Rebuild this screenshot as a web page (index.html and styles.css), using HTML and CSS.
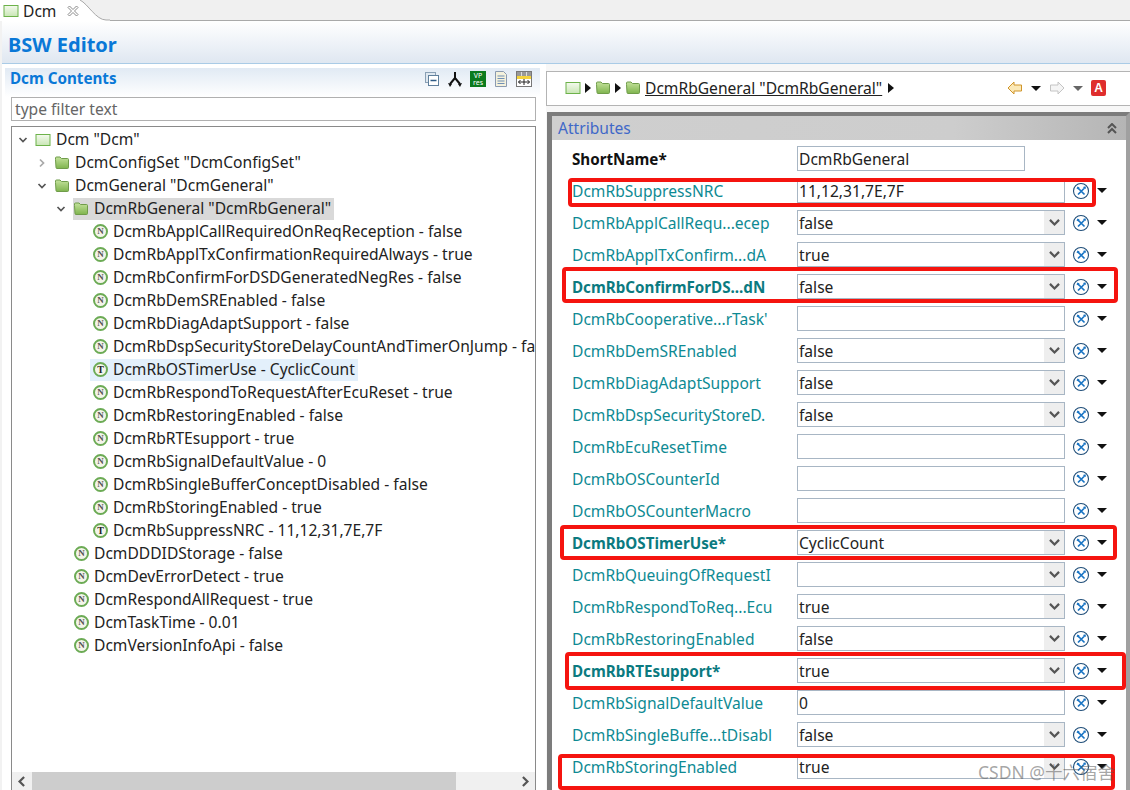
FILE: index.html
```html
<!DOCTYPE html>
<html lang="en">
<head>
<meta charset="utf-8">
<title>BSW Editor</title>
<link rel="stylesheet" href="styles.css">
</head>
<body>
<svg class="defs" width="0" height="0" aria-hidden="true">
  <defs>
    <linearGradient id="gf" x1="0" y1="0" x2="0" y2="1"><stop offset="0" stop-color="#c4e29c"/><stop offset="1" stop-color="#7fb44e"/></linearGradient>
    <linearGradient id="gb" x1="0" y1="0" x2="0" y2="1"><stop offset="0" stop-color="#f4faee"/><stop offset="1" stop-color="#c9e6b5"/></linearGradient>
    <symbol id="folder" viewBox="0 0 16 14"><path d="M1.500 3.500V2q0-1 1-1h3.500l1.500 1.500h6q1 0 1 1v8q0 1-1 1h-10.500q-1 0-1-1z" fill="url(#gf)" stroke="#6f9c4a"/></symbol>
    <symbol id="box" viewBox="0 0 16 14"><rect x="1" y="1.500" width="14" height="11" fill="url(#gb)" stroke="#6db24a"/></symbol>
    <symbol id="tools" viewBox="0 0 18 18"><circle cx="9" cy="9" r="7.500" fill="#fff" stroke="#1f4e79" stroke-width="1.100"/><path d="M6 6l6.500 6.500M12 6.500l-6 6" stroke="#1874c4" stroke-width="1.700"/><path d="M4.500 6.500l1-2 2 1-1 2zM11 5l2.500-.8.500 2.300-1.500.5z" fill="#1874c4"/></symbol>
    <symbol id="chev" viewBox="0 0 10 10"><path d="M1.500 3l3.500 3.500 3.500-3.500" fill="none" stroke="#555" stroke-width="1.700"/></symbol>
  </defs>
</svg>
<div class="tabbar">
  <div class="tab"><svg class="ic16"><use href="#box"/></svg><span>Dcm</span>
    <svg class="close" width="12" height="12" viewBox="0 0 12 12"><path d="M1 2.500L2.500 1 6 4.500 9.500 1 11 2.500 7.500 6 11 9.500 9.500 11 6 7.500 2.500 11 1 9.500 4.500 6z" fill="#fff" stroke="#8a8a8a"/></svg>
  </div>
  <svg class="tabcurve" width="30" height="21"><path d="M0 0C8 4 16 20 26 20H30V21H0z" fill="#fff"/><path d="M0 0C8 4 16 20 26 20H30" fill="none" stroke="#a9a9a9"/></svg>
</div>
<header class="edhead">BSW Editor</header>
<main class="work">
  <section class="left">
    <div class="lhead">
      <h2>Dcm Contents</h2>
      <div class="ltools">
        <svg width="16" height="16" viewBox="0 0 16 16"><rect x="1.500" y="1.500" width="10" height="10" fill="#dfe8f0" stroke="#8aa0b5"/><rect x="4.500" y="4.500" width="10" height="10" fill="#fff" stroke="#5f7f9c"/><path d="M6.500 9.500h6" stroke="#2d5a85" stroke-width="1.500"/></svg>
        <svg width="16" height="16" viewBox="0 0 16 16"><path d="M8 1v6M8 7L3 13M8 7l5 6" fill="none" stroke="#111" stroke-width="2"/><path d="M1 12l4 1-2 3zM15 12l-4 1 2 3z" fill="#111"/></svg>
        <span class="vp"><b>VP</b><i>res</i></span>
        <svg width="16" height="16" viewBox="0 0 16 16"><path d="M2.500 .5h8l3 3v12h-11z" fill="#f4f1dc" stroke="#8a9ab0"/><path d="M4.500 5h7M4.500 7.500h7M4.500 10h7M4.500 12.500h7" stroke="#6f8fb5"/></svg>
        <svg width="16" height="16" viewBox="0 0 16 16"><rect x=".5" y=".5" width="15" height="15" fill="#fff" stroke="#777"/><rect x="1" y="1" width="14" height="4" fill="#999"/><path d="M5.500 1v4M10.500 1v4" stroke="#ddd"/><rect x="1" y="5" width="14" height="3" fill="#f5d33c"/><path d="M2.500 11h11M2.500 11l2-2M2.500 11l2 2M13.500 11l-2-2M13.500 11l-2 2M8 8v6" stroke="#222" fill="none"/></svg>
      </div>
    </div>
    <div class="filter">type filter text</div>
    <div class="treebox">
      <ul class="tree">
        <li class="r l0"><svg class="tw"><use href="#chev"/></svg><svg class="ic16"><use href="#box"/></svg><span>Dcm "Dcm"</span></li>
        <li class="r l1"><svg class="tw side"><use href="#chev"/></svg><svg class="ic16"><use href="#folder"/></svg><span>DcmConfigSet "DcmConfigSet"</span></li>
        <li class="r l1"><svg class="tw"><use href="#chev"/></svg><svg class="ic16"><use href="#folder"/></svg><span>DcmGeneral "DcmGeneral"</span></li>
        <li class="r l2"><svg class="tw"><use href="#chev"/></svg><div class="pick sel"><svg class="ic16"><use href="#folder"/></svg><span>DcmRbGeneral "DcmRbGeneral"</span></div></li>
        <li class="r l3"><i class="nd">N</i><span>DcmRbApplCallRequiredOnReqReception - false</span></li>
        <li class="r l3"><i class="nd">N</i><span>DcmRbApplTxConfirmationRequiredAlways - true</span></li>
        <li class="r l3"><i class="nd">N</i><span>DcmRbConfirmForDSDGeneratedNegRes - false</span></li>
        <li class="r l3"><i class="nd">N</i><span>DcmRbDemSREnabled - false</span></li>
        <li class="r l3"><i class="nd">N</i><span>DcmRbDiagAdaptSupport - false</span></li>
        <li class="r l3"><i class="nd">N</i><span class="cut">DcmRbDspSecurityStoreDelayCountAndTimerOnJump - fa</span></li>
        <li class="r l3"><div class="pick hov"><i class="nd t">T</i><span>DcmRbOSTimerUse - CyclicCount</span></div></li>
        <li class="r l3"><i class="nd">N</i><span>DcmRbRespondToRequestAfterEcuReset - true</span></li>
        <li class="r l3"><i class="nd">N</i><span>DcmRbRestoringEnabled - false</span></li>
        <li class="r l3"><i class="nd">N</i><span>DcmRbRTEsupport - true</span></li>
        <li class="r l3"><i class="nd">N</i><span>DcmRbSignalDefaultValue - 0</span></li>
        <li class="r l3"><i class="nd">N</i><span>DcmRbSingleBufferConceptDisabled - false</span></li>
        <li class="r l3"><i class="nd">N</i><span>DcmRbStoringEnabled - true</span></li>
        <li class="r l3"><i class="nd t">T</i><span>DcmRbSuppressNRC - 11,12,31,7E,7F</span></li>
        <li class="r l2b"><i class="nd">N</i><span>DcmDDDIDStorage - false</span></li>
        <li class="r l2b"><i class="nd">N</i><span>DcmDevErrorDetect - true</span></li>
        <li class="r l2b"><i class="nd">N</i><span>DcmRespondAllRequest - true</span></li>
        <li class="r l2b"><i class="nd">N</i><span>DcmTaskTime - 0.01</span></li>
        <li class="r l2b"><i class="nd">N</i><span>DcmVersionInfoApi - false</span></li>
      </ul>
      <div class="hscroll"><svg class="sarrow flip" viewBox="0 0 10 10"><use href="#chev"/></svg><div class="thumb"></div><svg class="sarrow" viewBox="0 0 10 10"><use href="#chev"/></svg></div>
    </div>
  </section>
  <section class="right">
    <nav class="crumb">
      <svg class="ic16"><use href="#box"/></svg><i class="tri"></i>
      <svg class="ic16"><use href="#folder"/></svg><i class="tri"></i>
      <svg class="ic16"><use href="#folder"/></svg>
      <a class="link">DcmRbGeneral "DcmRbGeneral"</a><i class="tri"></i>
      <div class="navs">
        <svg width="16" height="14" viewBox="0 0 16 14"><path d="M7 1L1 7l6 6V10h7.500V4H7z" fill="#fbe9b8" stroke="#d0952a"/></svg><i class="dn"></i>
        <svg width="16" height="14" viewBox="0 0 16 14"><path d="M9 1l6 6-6 6V10H1.500V4H9z" fill="#f5f5f5" stroke="#c4c4c4"/></svg><i class="dn gray"></i>
        <span class="abtn">A</span>
      </div>
    </nav>
    <div class="attr">
      <div class="attrhead"><h3>Attributes</h3><svg class="coll" width="10" height="11" viewBox="0 0 10 11"><path d="M1 5l4-4 4 4M1 10l4-4 4 4" fill="none" stroke="#555" stroke-width="2"/></svg></div>
      <div class="form">
        <div class="row"><label class="bold">ShortName*</label><div class="fld short">DcmRbGeneral</div></div>
        <div class="row"><label>DcmRbSuppressNRC</label><div class="fld">11,12,31,7E,7F</div><svg class="tl"><use href="#tools"/></svg><i class="dn"></i></div>
        <div class="row"><label>DcmRbApplCallRequ...ecep</label><div class="fld sl">false<b><svg><use href="#chev"/></svg></b></div><svg class="tl"><use href="#tools"/></svg><i class="dn"></i></div>
        <div class="row"><label>DcmRbApplTxConfirm...dA</label><div class="fld sl">true<b><svg><use href="#chev"/></svg></b></div><svg class="tl"><use href="#tools"/></svg><i class="dn"></i></div>
        <div class="row"><label class="bold tealb">DcmRbConfirmForDS...dN</label><div class="fld sl">false<b><svg><use href="#chev"/></svg></b></div><svg class="tl"><use href="#tools"/></svg><i class="dn"></i></div>
        <div class="row"><label>DcmRbCooperative...rTask'</label><div class="fld"></div><svg class="tl"><use href="#tools"/></svg><i class="dn"></i></div>
        <div class="row"><label>DcmRbDemSREnabled</label><div class="fld sl">false<b><svg><use href="#chev"/></svg></b></div><svg class="tl"><use href="#tools"/></svg><i class="dn"></i></div>
        <div class="row"><label>DcmRbDiagAdaptSupport</label><div class="fld sl">false<b><svg><use href="#chev"/></svg></b></div><svg class="tl"><use href="#tools"/></svg><i class="dn"></i></div>
        <div class="row"><label>DcmRbDspSecurityStoreD.</label><div class="fld sl">false<b><svg><use href="#chev"/></svg></b></div><svg class="tl"><use href="#tools"/></svg><i class="dn"></i></div>
        <div class="row"><label>DcmRbEcuResetTime</label><div class="fld"></div><svg class="tl"><use href="#tools"/></svg><i class="dn"></i></div>
        <div class="row"><label>DcmRbOSCounterId</label><div class="fld"></div><svg class="tl"><use href="#tools"/></svg><i class="dn"></i></div>
        <div class="row"><label>DcmRbOSCounterMacro</label><div class="fld"></div><svg class="tl"><use href="#tools"/></svg><i class="dn"></i></div>
        <div class="row"><label class="bold tealb">DcmRbOSTimerUse*</label><div class="fld sl">CyclicCount<b><svg><use href="#chev"/></svg></b></div><svg class="tl"><use href="#tools"/></svg><i class="dn"></i></div>
        <div class="row"><label>DcmRbQueuingOfRequestI</label><div class="fld sl"><b><svg><use href="#chev"/></svg></b></div><svg class="tl"><use href="#tools"/></svg><i class="dn"></i></div>
        <div class="row"><label>DcmRbRespondToReq...Ecu</label><div class="fld sl">true<b><svg><use href="#chev"/></svg></b></div><svg class="tl"><use href="#tools"/></svg><i class="dn"></i></div>
        <div class="row"><label>DcmRbRestoringEnabled</label><div class="fld sl">false<b><svg><use href="#chev"/></svg></b></div><svg class="tl"><use href="#tools"/></svg><i class="dn"></i></div>
        <div class="row"><label class="bold tealb">DcmRbRTEsupport*</label><div class="fld sl">true<b><svg><use href="#chev"/></svg></b></div><svg class="tl"><use href="#tools"/></svg><i class="dn"></i></div>
        <div class="row"><label>DcmRbSignalDefaultValue</label><div class="fld">0</div><svg class="tl"><use href="#tools"/></svg><i class="dn"></i></div>
        <div class="row"><label>DcmRbSingleBuffe...tDisabl</label><div class="fld sl">false<b><svg><use href="#chev"/></svg></b></div><svg class="tl"><use href="#tools"/></svg><i class="dn"></i></div>
        <div class="row"><label>DcmRbStoringEnabled</label><div class="fld sl">true<b><svg><use href="#chev"/></svg></b></div><svg class="tl"><use href="#tools"/></svg><i class="dn"></i></div>
      </div>
    </div>
  </section>
</main>
<div class="mark m1"></div>
<div class="mark m2"></div>
<div class="mark m3"></div>
<div class="mark m4"></div>
<div class="mark m5"></div>
<div class="wm">CSDN @十六宿舍</div>
</body>
</html>
```
FILE: styles.css
```css
* { box-sizing: border-box; }
html, body { margin: 0; height: 790px; overflow: hidden; }
body { background: #f2f2f2; font-family: "Noto Sans", "Noto Sans CJK SC", sans-serif; font-size: 15.6px; color: #222; position: relative; }
.defs { position: absolute; }
h2, h3 { margin: 0; }
ul { margin: 0; padding: 0; list-style: none; }
.ic16 { width: 16px; height: 14px; flex: none; }

.tabbar { height: 21px; display: flex; background: #f0f0f0; border-bottom: 1px solid #a9a9a9; }
.tab { width: 80px; height: 21px; background: #fff; display: flex; align-items: center; padding-left: 3px; gap: 4px; color: #222; }
.tab .close { margin-left: 7px; }
.tabcurve { flex: none; }

.edhead { height: 43px; margin-left: 2px; background: linear-gradient(#fff, #dfe7f1); border-bottom: 1px solid #a9cbe6; color: #0a78d7; font-weight: 700; font-size: 20px; line-height: 48px; padding-left: 6px; }

.work { display: flex; height: 726px; background: #fff; margin-left: 2px; }
.left { width: 544px; padding: 4px 10px 0 3px; display: flex; flex-direction: column; background: #fff; flex: none; }
.lhead { height: 29px; display: flex; justify-content: space-between; background: linear-gradient(#e1eaf4, #fff); padding: 0 8px 0 5px; margin-right: -4px; }
.lhead h2 { font-size: 15.2px; line-height: 20px; color: #0a78d7; font-weight: 700; }
.ltools { display: flex; gap: 7px; align-items: flex-start; padding-top: 3px; }
.vp { width: 16px; height: 16px; background: #0b7a1e; color: #fff; font-size: 7px; line-height: 7px; display: block; padding-top: 1px; text-align: center; }
.vp b, .vp i { display: block; font-weight: 400; font-style: normal; }
.filter { height: 24px; margin-left: 6px; border: 1px solid #b0b0b0; color: #666; line-height: 22px; padding-left: 3px; }
.treebox { margin: 5px 0 0 6px; flex: 1; border: 1px solid #8a8a8a; border-bottom: 0; position: relative; overflow: hidden; padding-top: 1px; }

.tree { white-space: nowrap; }
.r { height: 23px; display: flex; align-items: center; position: relative; }
.r span { line-height: 21px; padding: 0 3px; }
.l0 { padding-left: 6px; }
.l1 { padding-left: 25px; }
.l2 { padding-left: 44px; }
.l3 { padding-left: 81px; }
.l2b { padding-left: 62px; }
.tw { width: 10px; height: 10px; flex: none; margin-right: 7px; }
.tw.side { transform: rotate(-90deg); opacity: .5; }
.r .ic16 { margin-right: 2px; }
.pick { display: flex; align-items: center; height: 22px; }
.sel { background: #d9d9d9; padding-left: 0; }
.sel span { padding-left: 3px; }
.hov { background: #e3f0fb; margin-left: -3px; padding-left: 3px; }
.nd { width: 15px; height: 15px; flex: none; margin-right: 2px; border: 2px solid #6cab55; border-radius: 50%; background: #f4f4ea; color: #555; font: 700 9px/11px "Liberation Serif", serif; text-align: center; }
.nd.t { color: #222; font-size: 10px; }
.hscroll { position: absolute; left: 0; right: 0; bottom: 0; height: 18px; background: #f0f0f0; display: flex; align-items: center; justify-content: space-between; }
.thumb { position: absolute; left: 20px; top: 0; bottom: 0; width: 424px; background: #cdcdcd; }
.sarrow { width: 13px; height: 13px; transform: rotate(-90deg); margin: 0 3px; }
.sarrow.flip { transform: rotate(90deg); }

.right { width: 584px; flex: none; padding: 7px 0 0 0; background: #f7f7f7; }
.crumb { height: 35px; background: #fff; border: 1px solid #b4b4b4; border-right: 0; display: flex; align-items: center; padding-left: 18px; gap: 4px; padding-bottom: 1px; }
.link { text-decoration: underline; color: #222; margin-right: 2px; }
.tri { width: 0; height: 0; border-left: 6px solid #111; border-top: 5px solid transparent; border-bottom: 5px solid transparent; }
.navs { margin-left: auto; display: flex; align-items: center; gap: 8px; padding-right: 24px; }
.dn { width: 0; height: 0; flex: none; border-top: 5px solid #111; border-left: 5px solid transparent; border-right: 5px solid transparent; }
.dn.gray { border-top-color: #666; }
.abtn { width: 15px; height: 16px; background: #df2d2d; color: #fff; font: 700 12px/16px "Liberation Sans", sans-serif; text-align: center; border-radius: 2px; }

.attr { margin: 6px 0 0 1px; background: #fff; border: 5px solid #7c7c7c; border-top-width: 4px; border-right: 4px solid #a0a0a0; height: 700px; }
.attrhead { height: 24px; background: linear-gradient(to right, #cfcfcf, #cdcdcd 70%, #b5b5b5); display: flex; justify-content: space-between; padding: 0 9px 0 6px; align-items: center; }
.attrhead h3 { font-weight: 400; font-size: 15.6px; color: #3f68c8; }
.form { padding-top: 3px; }
.row { height: 32px; display: flex; align-items: center; padding-left: 20px; padding-bottom: 1px; }
.row label { width: 225px; flex: none; color: #0e8a93; white-space: nowrap; overflow: hidden; border-right: 25px solid transparent; }
.row label.bold { color: #111; font-weight: 700; font-size: 15.2px; }
.row label.tealb { color: #0b7a80; }
.fld { width: 268px; height: 25px; flex: none; border: 1px solid #a8b6c4; line-height: 24px; padding-left: 1px; color: #222; position: relative; }
.fld.short { width: 228px; }
.fld b { position: absolute; right: 0; top: 0; bottom: 0; width: 20px; background: #eee; display: flex; align-items: center; justify-content: center; }
.fld b svg { width: 13px; height: 13px; }
.tl { width: 18px; height: 18px; margin-left: 7px; flex: none; }
.row .dn { margin-left: 7px; }

.mark { position: absolute; border: 4px solid #f5140f; border-radius: 4px; pointer-events: none; }
.m1 { left: 568px; top: 178px; width: 528px; height: 29px; }
.m2 { left: 562px; top: 267px; width: 556px; height: 36px; }
.m3 { left: 560px; top: 525px; width: 557px; height: 35px; }
.m4 { left: 565px; top: 652px; width: 561px; height: 38px; }
.m5 { left: 558px; top: 754px; width: 557px; height: 36px; }
.wm { position: absolute; left: 978px; top: 761px; font-size: 17.5px; line-height: 22px; color: rgba(90,90,90,.55); white-space: nowrap; }
```
